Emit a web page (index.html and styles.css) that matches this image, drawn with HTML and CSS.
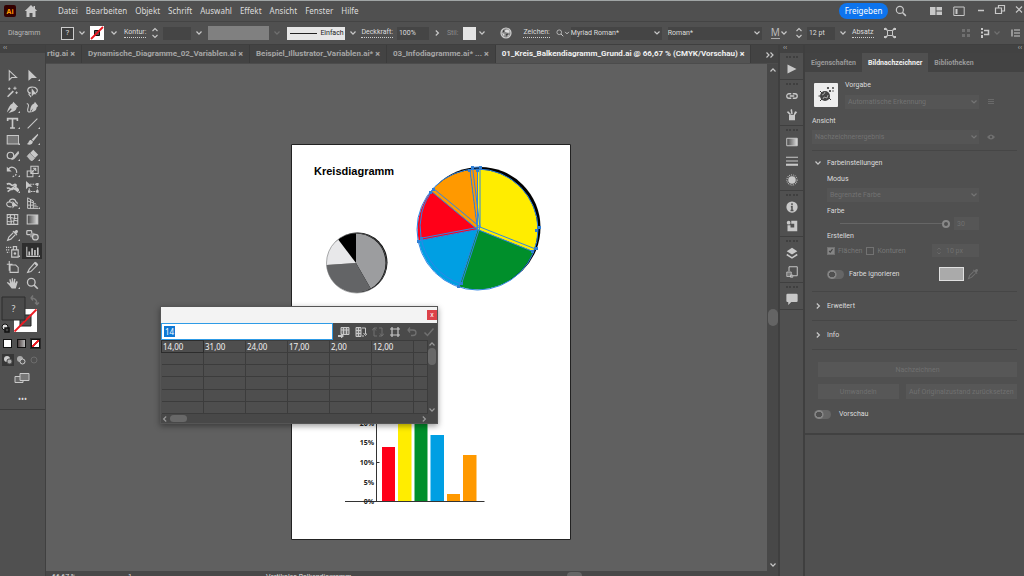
FILE: index.html
```html
<!DOCTYPE html>
<html lang="de">
<head>
<meta charset="utf-8">
<title>01_Kreis_Balkendiagramm_Grund.ai</title>
<link rel="stylesheet" href="styles.css">
</head>
<body>
<svg class="defs" aria-hidden="true">
<defs>
<symbol id="down" viewBox="0 0 8 8"><path d="M1.500 2.500 4 5.200l2.500-2.700" fill="none" stroke="currentColor" stroke-width="1.200"/></symbol>
<symbol id="up" viewBox="0 0 8 8"><path d="M1.500 5.500 4 2.800l2.500 2.700" fill="none" stroke="currentColor" stroke-width="1.200"/></symbol>
<symbol id="right" viewBox="0 0 8 8"><path d="M2.800 1.500 5.400 4 2.800 6.500" fill="none" stroke="currentColor" stroke-width="1.200"/></symbol>
<symbol id="left" viewBox="0 0 8 8"><path d="M5.200 1.500 2.600 4l2.600 2.500" fill="none" stroke="currentColor" stroke-width="1.200"/></symbol>
<symbol id="spin" viewBox="0 0 8 12"><path d="M1.500 4 4 1.500 6.500 4M1.500 8 4 10.500 6.500 8" fill="none" stroke="currentColor" stroke-width="1.100"/></symbol>
<symbol id="lens" viewBox="0 0 16 16"><circle cx="6.500" cy="6.500" r="4.700" fill="none" stroke="currentColor" stroke-width="1.600"/><path d="m10 10 4.500 4.500" stroke="currentColor" stroke-width="2"/></symbol>
<symbol id="drop" viewBox="0 0 16 16"><path d="M9 4.500 3.500 10 2 14l4-1.500L11.500 7" fill="none" stroke="currentColor" stroke-width="1.400"/><path d="m8 3 5 5 1-1-1.200-1.200 1.500-1.500c1.500-1.800-.8-4-2.600-2.600l-1.500 1.500L9 2z" fill="currentColor"/></symbol>
</defs>
</svg>

<header class="menubar">
  <svg class="logo" viewBox="0 0 12 12"><rect width="12" height="12" rx="2" fill="#330000"/><text x="6" y="9" text-anchor="middle" class="logo-text">Ai</text></svg>
  <svg class="home" viewBox="0 0 14 14"><path d="M7 1 .8 7h1.700v6H5.500V9h3v4h3V7h1.700L11 4.800V2H9.500v1.400z" fill="currentColor"/></svg>
  <nav class="menus">
    <a href="#">Datei</a><a href="#">Bearbeiten</a><a href="#">Objekt</a><a href="#">Schrift</a><a href="#">Auswahl</a><a href="#">Effekt</a><a href="#">Ansicht</a><a href="#">Fenster</a><a href="#">Hilfe</a>
  </nav>
  <button class="share">Freigeben</button>
  <svg class="i12 find"><use href="#lens"/></svg>
  <svg class="i12" viewBox="0 0 12 12"><path d="M0 2h5.500v8H0zM6.500 2H12v3.500H6.500zM6.500 6.500H12V10H6.500z" fill="currentColor"/></svg>
  <svg class="i12" viewBox="0 0 12 12"><path d="M.8 2h10.400v8.500H.8z" fill="none" stroke="currentColor"/><path d="M2.500 4h2v5h-2z" fill="currentColor"/></svg>
  <div class="window-buttons">
    <svg class="i12" viewBox="0 0 12 12"><path d="M3 6.500h6" stroke="currentColor" stroke-width="1.500"/></svg>
    <svg class="i12" viewBox="0 0 12 12"><path d="M1.500 4h6v5.500h-6zM4.500 4V1.500h6V7h-3" fill="none" stroke="currentColor" stroke-width="1.200"/></svg>
    <svg class="i12" viewBox="0 0 12 12"><path d="m3 2.500 6 6m0-6-6 6" stroke="currentColor" stroke-width="1.200"/></svg>
  </div>
</header>

<section class="options">
  <span class="object-type">Diagramm</span>
  <button class="fill-box">?</button><svg class="chev w16"><use href="#down"/></svg>
  <svg class="stroke-box" viewBox="0 0 14 14"><path d="M0 0h14v14H0z" fill="#fff"/><path d="M4.500 4.500h5v5h-5z" fill="#555" stroke="#111"/><path d="M1 13 13 1" stroke="#e8141e" stroke-width="1.800"/></svg><svg class="chev w20"><use href="#down"/></svg>
  <label class="link" for="stroke">Kontur:</label><svg class="spin"><use href="#spin"/></svg>
  <input class="field w28" id="stroke"><svg class="chev w16"><use href="#down"/></svg>
  <span class="profile"></span><svg class="chev w16 faint"><use href="#down"/></svg>
  <button class="brush"><i></i>Einfach</button><svg class="chev w16"><use href="#down"/></svg>
  <label class="link" for="opacity">Deckkraft:</label>
  <input class="field w32" id="opacity" value="100%"><svg class="chev w16"><use href="#right"/></svg>
  <span class="dim">Stil:</span><span class="style-box"></span><svg class="chev w12"><use href="#down"/></svg>
  <svg class="globe" viewBox="0 0 12 12"><circle cx="6" cy="6" r="5" fill="#888" stroke="#ccc" stroke-width="1.200"/><path d="M5 3.500c2-2 4-.5 4.500 1S8 6 7 5.500 4.500 5 5 3.500zM2 6l2.500 1L4 9.500zM7 8h2l-1.500 2z" fill="#ddd"/><path d="M3 3l1.500 1L3 5.500zM6 7l2-.5L7 10z" fill="#333"/></svg>
  <label class="link" for="font">Zeichen:</label>
  <svg class="i8"><use href="#lens"/></svg><svg class="i6"><use href="#down"/></svg>
  <select class="font-select" id="font"><option>Myriad Roman*</option></select>
  <select class="font-select cut" aria-label="Schriftschnitt"><option>Roman*</option></select>
  <span class="size-icon">M</span><svg class="i8 gap"><use href="#down"/></svg>
  <svg class="spin"><use href="#spin"/></svg>
  <input class="field w28" value="12 pt" aria-label="Schriftgröße"><svg class="chev w16"><use href="#down"/></svg>
  <a class="link" href="#">Absatz</a>
  <svg class="i12 envelope" viewBox="0 0 12 12"><path d="M3.500 3.500h5v5h-5z" fill="none" stroke="currentColor"/><path d="m1 1 2.500 2.500M11 1 8.500 3.500M1 11l2.500-2.500M11 11 8.500 8.500" stroke="currentColor" stroke-width="1.300"/><path d="M0 1h2.500v2H0zM9.500 1H12v2H9.500zM0 9h2.500v2H0zM9.500 9H12v2H9.500z" fill="currentColor"/></svg>
  <svg class="i12 faint push" viewBox="0 0 12 12"><path d="M2 2h3v3H2zM7 2h3v3H7zM2 7h3v3H2zM7 7h3v3H7z" fill="currentColor"/></svg>
  <svg class="i12" viewBox="0 0 12 12"><path d="M2 1h2v2H2zM2 4.500h2v2H2zM2 8h2v3H2z" fill="currentColor"/><path d="M5 3.500h4.500v4H5" fill="none" stroke="currentColor" stroke-width="1.500"/></svg>
  <svg class="chev w12 faint"><use href="#down"/></svg>
  <svg class="i12 list" viewBox="0 0 12 12"><path d="M2 2.500v7M4 3h6M4 6h6M4 9h6" stroke="currentColor" stroke-width="1.200"/></svg>
</section>

<main class="workspace">
  <aside class="tools">
    <div class="strip">‹‹</div>
    <div class="tool-grid">
      <button aria-label="Auswahl"><svg viewBox="0 0 16 16"><path d="M4 2v11.500L7 10.500h6z" fill="none" stroke="currentColor" stroke-width="1.300"/></svg></button>
      <button class="more" aria-label="Direktauswahl"><svg viewBox="0 0 16 16"><path d="M3 1v13.500L7 11h6.500z" fill="currentColor"/></svg></button>
      <button aria-label="Zauberstab"><svg viewBox="0 0 16 16"><path d="M2 14.500 9 7.500" stroke="currentColor" stroke-width="2"/><path d="M11 2v4M9 4h4M4 3v3M2.500 4.500h3M13 8v3M11.500 9.500h3" stroke="currentColor" stroke-width="1.200"/></svg></button>
      <button aria-label="Lasso"><svg viewBox="0 0 16 16"><path d="M6 10C1 10 .5 3 7 2.500s9 5 5 7M4 10c-2 3 3 3 1.500 5" fill="none" stroke="currentColor" stroke-width="1.500"/><path d="M7 4v10l2.500-2.500H13z" fill="currentColor"/></svg></button>
      <button class="more" aria-label="Zeichenstift"><svg viewBox="0 0 16 16"><path d="m9 1 6 6-2 1c0 4-4 5-10 7l4-5-1-1-5 5C3 8 5 4 8 3z" fill="currentColor"/></svg></button>
      <button aria-label="Kurvenzeichner"><svg viewBox="0 0 16 16"><path d="m11 1 4 5-2 2c0 4-3 5-7 6l3-5-4 4C5 8 7 4 10 3z" fill="currentColor"/><path d="M1 3c4 1 1 5 1 8s2 3 4 2" fill="none" stroke="currentColor" stroke-width="1.300"/></svg></button>
      <button class="more" aria-label="Text"><svg viewBox="0 0 16 16"><path d="M2 5V2h12v3M8 2v11M5 13.500h6" fill="none" stroke="currentColor" stroke-width="2"/></svg></button>
      <button class="more" aria-label="Liniensegment"><svg viewBox="0 0 16 16"><path d="M2 14 14 2" stroke="currentColor" stroke-width="1.400"/></svg></button>
      <button class="more" aria-label="Rechteck"><svg viewBox="0 0 16 16"><path d="M1.500 3h14v10.500h-14z" fill="#777" stroke="currentColor" stroke-width="1.300"/></svg></button>
      <button class="more" aria-label="Pinsel"><svg viewBox="0 0 16 16"><path d="M14.500 1 7 8l2 2 6-7.500zM6 8.500C3 8.500 4 12 1 13.500c3 2 7 1 7.500-3z" fill="currentColor"/></svg></button>
      <button class="more" aria-label="Shaper"><svg viewBox="0 0 16 16"><circle cx="5.500" cy="8" r="4" fill="none" stroke="currentColor" stroke-width="1.500"/><path d="m15 3-6 7-2 3 3-1 6-7z" fill="currentColor" stroke="currentColor"/></svg></button>
      <button class="more" aria-label="Radiergummi"><svg viewBox="0 0 16 16"><path d="m9 1 6 6-4 4-6-6z" fill="currentColor"/><path d="M4.500 5.500 1.500 9l4.500 5h2l2.500-2.500z" fill="#bbb" stroke="currentColor"/></svg></button>
      <button class="more" aria-label="Drehen"><svg viewBox="0 0 16 16"><path d="M3 5c4-5 11-1 10 5-.5 3-4 5-7 4" fill="none" stroke="currentColor" stroke-width="1.500" stroke-dasharray="15 1.500 2 1.500 2"/><path d="M1 2v6h6z" fill="currentColor"/></svg></button>
      <button class="more" aria-label="Skalieren"><svg viewBox="0 0 16 16"><path d="M6 1.500h9v9H6zM1.500 7.500h7v7h-7z" fill="none" stroke="currentColor" stroke-width="1.300"/><path d="m6 10 6-6M8.500 4H12v3.500" fill="none" stroke="currentColor" stroke-width="1.300"/></svg></button>
      <button class="more" aria-label="Breite"><svg viewBox="0 0 16 16"><path d="M1 4c5-3 5 3 8 1s4 0 3 2 4 2 3 5M1 9c4-2 5 3 7 1s4 0 7 3M2 13l11-8" fill="none" stroke="currentColor" stroke-width="2"/></svg></button>
      <button aria-label="Frei transformieren"><svg viewBox="0 0 16 16"><path d="M5 4h9v9H4V8" fill="none" stroke="currentColor" stroke-width="1.300" stroke-dasharray="2 1"/><path d="M0 0v10l3-3h5zM12.500 2.500h3v3h-3zM12.500 11.500h3v3h-3zM2.500 11.500h3v3h-3z" fill="currentColor"/></svg></button>
      <button class="more" aria-label="Formerstellung"><svg viewBox="0 0 16 16"><path d="M7 12C0 13-1 6 4 6c1-5 8-4 8 0 2 0 2 2 2 3M4 6c3 0 5 2 4 5" fill="none" stroke="currentColor" stroke-width="1.300"/><path d="M8 5v9l2.500-2.500H15z" fill="currentColor"/></svg></button>
      <button class="more" aria-label="Perspektivenraster"><svg viewBox="0 0 16 16"><path d="M2 1v13h13M2 1l7 4v9M2 5l7 2M2 10h7M5.500 3v11" fill="none" stroke="currentColor" stroke-width="1.200"/><path d="M10 8h2M10 10h3M10 12h5" stroke="currentColor"/></svg></button>
      <button aria-label="Gitter"><svg viewBox="0 0 16 16"><path d="M1.500 2h13v12h-13zM1.500 6c5-3 8 3 13 0M1.500 10c5 3 8-3 13 0M6 2c-3 4 3 8 0 12M10 2c3 4-3 8 0 12" fill="none" stroke="currentColor" stroke-width="1.300"/></svg></button>
      <button aria-label="Verlauf"><svg viewBox="0 0 16 16"><defs><linearGradient id="grad"><stop stop-color="#444"/><stop offset="1" stop-color="#ddd"/></linearGradient></defs><path d="M1.500 2.500h13v11h-13z" fill="url(#grad)" stroke="currentColor" stroke-width="1.300"/></svg></button>
      <button class="more" aria-label="Pipette"><svg><use href="#drop"/></svg></button>
      <button aria-label="Angleichen"><svg viewBox="0 0 16 16"><rect x="1" y="2" width="6" height="5" rx="1" fill="none" stroke="currentColor" stroke-width="1.500"/><rect x="5" y="4.500" width="6" height="6" rx="2" fill="#999"/><circle cx="11.500" cy="10" r="3.500" fill="#666" stroke="currentColor" stroke-width="1.500"/></svg></button>
      <button class="more" aria-label="Symbol aufsprühen"><svg viewBox="0 0 16 16"><path d="M7 6h8v9H7zM9 2h4v4H9z" fill="none" stroke="currentColor" stroke-width="1.400"/><circle cx="11" cy="10.500" r="1.500" fill="currentColor"/><path d="M0 3h7M0 6h5M1 9h3" stroke="currentColor" stroke-width="1.500" stroke-dasharray="1.500 1"/></svg></button>
      <button class="more active" aria-label="Diagramm"><svg viewBox="0 0 16 16"><path d="M1 2v12h14" fill="none" stroke="currentColor" stroke-width="1.300"/><path d="M3 8h2v5H3zM6.500 4h2v9h-2zM10 6h2v7h-2zM13.500 3h2v10h-2z" fill="currentColor"/></svg></button>
      <button aria-label="Zeichenfläche"><svg viewBox="0 0 16 16"><path d="M4 0v12M1 4h7M5 5h7l3 3v6H5z" fill="none" stroke="currentColor" stroke-width="1.300"/></svg></button>
      <button class="more" aria-label="Slice"><svg viewBox="0 0 16 16"><path d="m11 2 3 3-8 8-4 1 2-4z" fill="none" stroke="currentColor" stroke-width="1.400"/><path d="m10 3 2-2 3 3-2 2z" fill="currentColor"/></svg></button>
      <button class="more" aria-label="Hand"><svg viewBox="0 0 16 16"><path d="M4 10 1 7l1-1 3 2-1-5 1.500-.5L7 7V1.500h1.700V7l1.500-5 1.500.5L11 8l2-3 1.500.8L12 14H7z" fill="currentColor"/></svg></button>
      <button aria-label="Zoom"><svg><use href="#lens"/></svg></button>
    </div>
    <svg class="paint" viewBox="0 0 44 42">
      <path d="M31 4q6 0 6 6M33 1.500 31 4l2 2.500M35 8.500l2 2 2-2" fill="none" stroke="#777" stroke-width="1.300"/>
      <path d="M14 15h23v23H14z" fill="#fff"/><path d="M20 21h11v11H20z" fill="#505050" stroke="#222"/><path d="m14.500 37.500 22-22" stroke="#ed1c24" stroke-width="1.800"/>
      <path d="M2 3h23v23H2z" fill="#4a4a4a" stroke="#2d2d2d"/><text x="13.500" y="18" text-anchor="middle" class="unknown">?</text>
      <circle cx="5" cy="33" r="3" fill="#ddd" stroke="#111"/><path d="M5 34h4v4H5z" fill="#444" stroke="#111" stroke-width="1.500"/>
    </svg>
    <div class="paint-modes">
      <button aria-label="Farbe"><i class="solid"></i></button><button aria-label="Verlauf"><i class="fade"></i></button><button class="none" aria-label="Ohne"><i class="slash"></i></button>
    </div>
    <div class="draw-modes">
      <svg class="on" viewBox="0 0 12 12"><circle cx="5" cy="5" r="3" fill="#ccc"/><rect x="5" y="5" width="5" height="5" rx="2" fill="#aaa" stroke="#444"/></svg>
      <svg viewBox="0 0 12 12"><circle cx="5" cy="5" r="3" fill="#aaa"/><circle cx="7.500" cy="7.500" r="2.500" fill="#555" stroke="#ccc"/></svg>
      <svg viewBox="0 0 12 12"><circle cx="6" cy="6" r="3" fill="none" stroke="#6c6c6c"/></svg>
    </div>
    <svg class="screen" viewBox="0 0 16 12"><path d="M1 4.500h8v6H1z" fill="#666" stroke="currentColor"/><path d="M6 1.500h9v7H6z" fill="#777" stroke="currentColor"/></svg>
    <div class="dots">•••</div>
  </aside>

  <section class="document">
    <div class="tabs">
      <a class="tab first" href="#">rtig.ai<b>×</b></a>
      <a class="tab" href="#">Dynamische_Diagramme_02_Variablen.ai<b>×</b></a>
      <a class="tab" href="#">Beispiel_Illustrator_Variablen.ai*<b>×</b></a>
      <a class="tab" href="#">03_Infodiagramme.ai* ...<b>×</b></a>
      <a class="tab current" href="#">01_Kreis_Balkendiagramm_Grund.ai @ 66,67 % (CMYK/Vorschau)<b>×</b></a>
      <svg class="tabs-more" viewBox="0 0 10 8"><path d="m1.500 1.500 2.500 2.500-2.500 2.500M5.500 1.500 8 4 5.500 6.500" fill="none" stroke="currentColor" stroke-width="1.200"/></svg>
    </div>
    <div class="view">
      <div class="canvas">
        <svg class="artboard" viewBox="291 144 280 396">
          <path d="M291.500 144.500h279v395h-279z" fill="#fff" stroke="#222"/>
          <text x="314" y="175" class="chart-title">Kreisdiagramm</text>
          <circle cx="357.500" cy="262.500" r="30"/>
          <g>
            <path d="M356 263V233.500A29.500 29.500 0 0 1 370.700 288.600z" fill="#9c9d9f"/>
            <path d="M356 263 370.700 288.600A29.500 29.500 0 0 1 326.500 265z" fill="#636466"/>
            <path d="M356 263 326.500 265A29.500 29.500 0 0 1 338.200 239.500z" fill="#e8e8ea"/>
            <circle cx="356.500" cy="263" r="30" fill="none" stroke="#77787a" stroke-width=".6"/>
          </g>
          <circle cx="480" cy="227.500" r="60.500"/>
          <g>
            <path d="M477.500 229.500V169.500H480A60 60 0 0 1 533.300 251.600z" fill="#ffed00"/>
            <path d="M477.500 229.500 533.300 251.600A60 60 0 0 1 459 286.600z" fill="#008f2b"/>
            <path d="M477.500 229.500 459 286.600A60 60 0 0 1 418.600 240.700z" fill="#009fe3"/>
            <path d="M477.500 229.500 418.600 240.700A60 60 0 0 1 431.300 191.300z" fill="#ff0018"/>
            <path d="M477.500 229.500 431.300 191.300A60 60 0 0 1 470 170z" fill="#ff9900"/>
            <path d="M477.500 229.500 470 170A60 60 0 0 1 477.500 169.500z" fill="#ff9900"/>
          </g>
          <g fill="none" stroke="#2f86e6">
            <circle cx="477.500" cy="229.500" r="60.500"/>
            <path d="M480 227V167M480 227 535.800 249.100M480 227 461.500 284.100M480 227 421.100 238.200M480 227 433.800 188.800M480 227 472.500 167.500M477.500 229.500V169.500M477.500 229.500 533.300 251.600M477.500 229.500 459 286.600M477.500 229.500 418.600 240.700M477.500 229.500 431.300 191.300M477.500 229.500 470 170M472.500 167.500A60 60 0 0 1 480 167M461.500 284.100A60 60 0 0 1 421.100 238.200M421.100 238.200A60 60 0 0 1 433.800 188.800"/>
          </g>
          <path d="M479 166h3v3h-3zM471 166h3v3h-3zM432 188h3v3h-3zM429 191h3v3h-3zM417 240h3v3h-3zM420 237h3v3h-3zM457 285h3v3h-3zM460 282h3v3h-3zM535 247h3v3h-3zM531 250h3v3h-3zM538 226h3v3h-3zM535 229h3v3h-3zM468 169h3v3h-3zM476 169h3v3h-3z" fill="#2f7fd6"/>
          <path d="M382 447h13v54h-13z" fill="#ff0018"/><path d="M398 380h13.500v121H398z" fill="#ffed00"/><path d="M414.500 407h13v94h-13z" fill="#008f2b"/><path d="M430.500 435h13.500v66h-13.500z" fill="#009fe3"/><path d="M447 494h13v7h-13zM463 455h13.500v46H463z" fill="#ff9900"/>
          <path d="M376.500 350v151.500M376.500 462.500h3M345 501.500h139.500" stroke="#333" fill="none"/>
          <g class="axis" text-anchor="end"><text x="374" y="426">20%</text><text x="374" y="445">15%</text><text x="374" y="465">10%</text><text x="374" y="485">5%</text><text x="374" y="504">0%</text></g>
        </svg>

        <section class="data-window">
          <div class="data-title"><button aria-label="Schließen">x</button></div>
          <div class="data-bar">
            <div class="entry"><input value="14" aria-label="Zellwert" class="entry-input"><mark>14</mark></div>
            <svg viewBox="0 0 12 12"><path d="M3 1.500h8v7H3zM3 4h8M5.500 1.500v7M8.500 1.500v7" fill="#777" stroke="currentColor"/><path d="M0 9h3V7l3 3-3 2.500V11H0z" fill="currentColor"/></svg>
            <svg viewBox="0 0 12 12"><path d="M1 1.500h5v9H1zM1 4.500h5M1 7.500h5M3.500 1.500v9" fill="#777" stroke="currentColor"/><path d="M7 2h3.500v6M8.500 7l2 2.500 2-2.500M7 10h2" fill="none" stroke="currentColor"/></svg>
            <svg class="faint" viewBox="0 0 12 12"><path d="M5 2H2v8h3M7 2h3v8H7M4 4.500 2 2 0 4.500M12 7.500 10 10 8 7.500" fill="none" stroke="currentColor"/></svg>
            <svg viewBox="0 0 12 12"><path d="M1 3h10M1 9h10M3 1v10M9 1v10" stroke="currentColor" stroke-width="1.200"/></svg>
            <svg class="faint" viewBox="0 0 12 12"><path d="M4 1.500 2 4l2 2.500M2 4h5c4 0 4 5.500 0 5.500H5" fill="none" stroke="currentColor" stroke-width="1.300"/></svg>
            <svg class="faint" viewBox="0 0 12 12"><path d="m1.500 6.500 3 3 6-7" fill="none" stroke="currentColor" stroke-width="1.500"/></svg>
          </div>
          <div class="data-body">
            <table>
              <tr><td class="picked">14,00</td><td>31,00</td><td>24,00</td><td>17,00</td><td>2,00</td><td>12,00</td><td class="rest"></td></tr>
              <tr><td></td><td></td><td></td><td></td><td></td><td></td><td></td></tr>
              <tr><td></td><td></td><td></td><td></td><td></td><td></td><td></td></tr>
              <tr><td></td><td></td><td></td><td></td><td></td><td></td><td></td></tr>
              <tr><td></td><td></td><td></td><td></td><td></td><td></td><td></td></tr>
              <tr><td></td><td></td><td></td><td></td><td></td><td></td><td></td></tr>
            </table>
            <div class="data-v"><svg class="i8"><use href="#up"/></svg><i></i><svg class="i8 end"><use href="#down"/></svg></div>
          </div>
          <div class="data-h"><svg class="i8"><use href="#left"/></svg><i></i><svg class="i8 end"><use href="#right"/></svg></div>
        </section>
      </div>
      <div class="scroll"><svg class="i8"><use href="#up"/></svg><i></i><svg class="i8"><use href="#down"/></svg></div>
    </div>
    <footer class="status"><span class="zoom-level">66,67 %</span><span class="board">1</span><span>Vertikales Balkendiagramm</span><i class="track"><i></i></i></footer>
  </section>

  <aside class="dock">
    <div class="strip">‹‹</div>
    <div class="group"><svg viewBox="0 0 16 16"><path d="M2 2v12l12-6z" fill="currentColor"/></svg></div>
    <div class="group"><svg viewBox="0 0 16 16"><path d="M7 5H4a3 3 0 0 0 0 6h3M9 5h3a3 3 0 0 1 0 6H9M5 8h6" fill="none" stroke="currentColor" stroke-width="1.700"/></svg><svg viewBox="0 0 16 16"><path d="M4 8h8v7H4zM7 7 6 1l2-1 1 7zM5 8 1 4l2-1 4 4zM10 8l2-5 3 1-3 4z" fill="currentColor"/></svg></div>
    <div class="group"><svg viewBox="0 0 16 16"><path d="M1 3h14v10H1z" fill="url(#grad)" stroke="currentColor" stroke-width="1.300"/></svg><svg viewBox="0 0 16 16"><path d="M0 3h16M0 8h16" stroke="currentColor" stroke-width="1.600"/><path d="M0 13h16" stroke="currentColor" stroke-width="2.800"/></svg><svg viewBox="0 0 16 16"><circle cx="8" cy="8" r="5" fill="currentColor"/><circle cx="8" cy="8" r="6.800" fill="none" stroke="currentColor" stroke-width="1.500" stroke-dasharray="1 1.500"/></svg></div>
    <div class="group"><svg viewBox="0 0 16 16"><circle cx="8" cy="8" r="7.500" fill="currentColor"/><path d="M8 3v2.500M6.500 7.500H8v5M6 12.500h4" stroke="#505050" stroke-width="2" fill="none"/></svg><svg viewBox="0 0 16 16"><path d="M7 1h8v14H2V7h4v3h5V5H7z" fill="currentColor"/><circle cx="3.500" cy="3.500" r="2.500" fill="currentColor"/></svg></div>
    <div class="group"><svg viewBox="0 0 16 16"><path d="m8 1 7 4.500L8 10 1 5.500z" fill="currentColor"/><path d="m1 10 7 4.500 7-4.500" fill="none" stroke="currentColor" stroke-width="2"/></svg><svg viewBox="0 0 16 16"><path d="M4 7V1h11v12H8" fill="none" stroke="currentColor" stroke-width="1.300"/><path d="M1 8h6v6H1zM6 12h3v3H6z" fill="#777" stroke="currentColor"/></svg></div>
    <div class="group"><svg viewBox="0 0 16 16"><path d="M2 1h12q1.500 0 1.500 1.500v8Q15.500 12 14 12H7l-4 4v-4H2Q.5 12 .5 10.500v-8Q.5 1 2 1z" fill="currentColor"/></svg></div>
  </aside>

  <aside class="panel">
    <div class="strip end">‹‹</div>
    <div class="panel-tabs"><button>Eigenschaften</button><button class="current">Bildnachzeichner</button><button>Bibliotheken</button></div>
    <div class="trace">
      <div class="preset">
        <svg class="preset-icon" viewBox="0 0 24 24"><rect width="24" height="24" rx="1" fill="#eee"/><path d="m6 8 2 2M17 17l-2-2M6 18l2-2M4.500 13h2" stroke="#333"/><circle cx="11" cy="13" r="5" fill="#444"/><path d="m8 12 2-1 1-2M9 16l1-2 3 1 1-3" stroke="#bbb" fill="none" stroke-width=".8"/><circle cx="14" cy="5" r="1.100" fill="#333"/><circle cx="16" cy="8" r="1.100" fill="#333"/><circle cx="19" cy="5" r=".9" fill="#333"/><circle cx="19" cy="8" r=".7" fill="#333"/></svg>
        <div class="preset-field"><label for="preset">Vorgabe</label><select id="preset"><option>Automatische Erkennung</option></select></div>
        <svg class="i8 side faint" viewBox="0 0 8 8"><path d="M1 1.500h6M1 3.500h6M1 5.500h6" stroke="currentColor" stroke-width=".8"/></svg>
      </div>
      <label class="view-label" for="view">Ansicht</label>
      <div class="view-row"><select id="view"><option>Nachzeichnerergebnis</option></select><svg class="i8 side faint" viewBox="0 0 8 8"><path d="M0 4q4-5 8 0-4 5-8 0z" fill="currentColor"/><circle cx="4" cy="4" r="1.200" fill="#505050"/></svg></div>
      <button class="fold"><svg class="i8"><use href="#down"/></svg>Farbeinstellungen</button>
      <div class="color-settings">
        <label for="mode">Modus</label>
        <select id="mode"><option>Begrenzte Farbe</option></select>
        <label class="upper" for="colors">Farbe</label>
        <div class="slider-row"><input type="range" id="colors" min="0" max="30" value="30"><input class="number" value="30" aria-label="Anzahl Farben"></div>
        <span>Erstellen</span>
        <div class="create-row">
          <label><input type="checkbox" checked>Flächen</label><label><input type="checkbox">Konturen</label>
          <span class="number px"><svg class="i8 faint"><use href="#spin"/></svg><input value="10 px" aria-label="Kontur"></span>
        </div>
        <div class="ignore-row"><label><input type="checkbox" class="toggle">Farbe ignorieren</label><button class="swatch" aria-label="Farbe wählen"></button><svg class="i12 faint"><use href="#drop"/></svg></div>
      </div>
      <button class="fold tall"><svg class="i8"><use href="#right"/></svg>Erweitert</button>
      <button class="fold tall"><svg class="i8"><use href="#right"/></svg>Info</button>
      <div class="actions"><button class="wide">Nachzeichnen</button><button>Umwandeln</button><button>Auf Originalzustand zurücksetzen</button></div>
      <label class="preview"><input type="checkbox" class="toggle">Vorschau</label>
    </div>
  </aside>
</main>
</body>
</html>
```

FILE: styles.css
```css
* { box-sizing: border-box; }
body {
  margin: 0;
  height: 100vh;
  overflow: hidden;
  display: flex;
  flex-direction: column;
  background: #505050;
  color: #dcdcdc;
  font: 7px/10px Roboto, "Noto Sans", sans-serif;
}
button, input, select { font: inherit; color: inherit; border: 0; padding: 0; margin: 0; background: none; border-radius: 0; appearance: none; }
a { color: inherit; text-decoration: none; }
svg { flex: none; display: block; color: #c8c8c8; }
.defs { position: absolute; width: 0; height: 0; }
.i6 { width: 6px; height: 6px; }
.i8 { width: 8px; height: 8px; }
.i12 { width: 12px; height: 12px; }
.faint { color: #707070; }

.menubar { flex: none; height: 22px; display: flex; align-items: center; border-top: 1px solid #a0a5a5; border-bottom: 1px solid #444; padding-left: 4px; }
.logo { width: 12px; height: 12px; }
.logo-text { font: bold 7px "Noto Sans", sans-serif; fill: #ff9a00; }
.home { width: 14px; height: 14px; margin: 0 20px 0 8px; }
.menus { flex: 1; display: flex; gap: 8px; font: 8px/10px "Noto Sans", sans-serif; }
.share { width: 49px; height: 16px; border-radius: 8px; background: #0d74ee; color: #fff; font: 8px/10px "Noto Sans", sans-serif; }
.find { margin: 0 23px 0 7px; }
.menubar .find ~ .i12 + .i12 { margin-left: 11px; }
.window-buttons { display: flex; gap: 7px; margin: 0 -1px 3px 10px; }

.options { flex: none; height: 23px; display: flex; align-items: center; padding: 0 2px 0 8px; border-bottom: 1px solid #3f3f3f; white-space: nowrap; }
.object-type { width: 53px; color: #b8b8b8; }
.fill-box { width: 13px; height: 13px; border: 1px solid #ccc; background: #3d3d3d; line-height: 10px; font-size: 8px; }
.chev { height: 8px; }
.w12 { width: 12px; }
.w16 { width: 16px; }
.w20 { width: 20px; }
.stroke-box { width: 14px; height: 14px; }
.link { border-bottom: 1px dotted #ccc; line-height: 9px; }
.spin { width: 8px; height: 12px; margin: 0 4px 0 5px; }
.field { height: 13px; background: #454545; padding-left: 2px; }
.w28 { width: 28px; }
.w32 { width: 32px; }
.profile { width: 61px; height: 14px; margin-left: 1px; background: #808080; }
.brush { width: 58px; height: 13px; margin-left: 2px; background: #e6e6e6; color: #222; display: flex; align-items: center; gap: 3px; padding-left: 3px; }
.brush i { width: 27px; border-top: 1px solid #222; }
.options .field.w32 { margin-left: 4px; }
.dim { color: #8c8c8c; margin-left: 2px; }
.style-box { width: 13px; height: 13px; background: #e4e4e4; margin-left: 5px; }
.globe { width: 12px; height: 12px; margin: 0 11px 0 12px; }
.options .link + .i8 { margin-left: 6px; }
select { appearance: none; background: #454545 url("data:image/svg+xml,%3Csvg xmlns='http://www.w3.org/2000/svg' width='8' height='8'%3E%3Cpath d='M1.500 2.500 4 5l2.500-2.500' fill='none' stroke='%23c8c8c8' stroke-width='1.200'/%3E%3C/svg%3E") right 1px center no-repeat; }
.font-select { width: 91px; height: 13px; margin-left: 1px; padding-left: 0; }
.font-select.cut { width: 94px; margin-left: 6px; }
.size-icon { font: 10px/11px "Noto Sans", sans-serif; color: #bbb; margin-left: 9px; border-bottom: 1px solid #aaa; }
.options .gap { margin-right: 2px; }
.options a.link { margin-left: 1px; }
.envelope { margin-left: 10px; }
.push { margin-left: auto; margin-right: 7px; }
.list { margin-left: 7px; }

.workspace { flex: 1; min-height: 0; display: flex; }
.strip { flex: none; height: 8px; background: #424242; color: #bbb; line-height: 6px; padding-left: 3px; }
.strip.end { text-align: right; padding-right: 2px; }
.tools { width: 46px; flex: none; border-right: 1px solid #404040; }
.tool-grid { display: grid; grid-template-columns: repeat(2, 20px); grid-auto-rows: 16px; padding: 14px 0 0 2px; }
.tool-grid button { position: relative; display: grid; place-items: center; }
.tool-grid svg { width: 13px; height: 13px; }
.tool-grid .more::after { content: ""; position: absolute; right: 2px; bottom: 2px; border: 1px solid #c8c8c8; border-top-color: transparent; border-left-color: transparent; }
.tool-grid .active { background: #2e2e2e; }
.paint { width: 44px; height: 42px; margin-top: 3px; }
.unknown { font: 9px "Noto Sans", sans-serif; fill: #ddd; }
.paint-modes { display: flex; gap: 3px; padding-left: 2px; margin-top: 2px; }
.paint-modes button { width: 11px; height: 11px; padding: 1px; display: flex; }
.paint-modes i { flex: 1; border: 1px solid #111; }
.solid { background: #fff; }
.fade { background: linear-gradient(90deg, #4b4040, #bbb); }
.slash { background: linear-gradient(135deg, #fff 40%, #ed1c24 40% 60%, #fff 60%); }
.paint-modes .none { background: #2e2e2e; }
.draw-modes { display: flex; gap: 1px; padding: 5px 0 0 2px; }
.draw-modes svg { width: 12px; height: 12px; }
.draw-modes .on { background: #363636; }
.screen { width: 16px; height: 12px; margin: 6px 0 0 14px; }
.dots { text-align: center; padding: 10px 0 5px; font: 8px/10px "Noto Sans", sans-serif; border-bottom: 1px solid #3c3c3c; }

.document { flex: 1; min-width: 0; display: flex; flex-direction: column; }
.tabs { flex: none; height: 19px; background: #434343; display: flex; color: #a6a6a6; font-size: 8px; font-weight: 700; overflow: hidden; border-bottom: 1px solid #4c4c4c; }
.tab { flex: none; display: flex; align-items: center; gap: 2px; padding: 0 6px; white-space: nowrap; border-right: 1px solid #3b3b3b; }
.tab b { font-size: 9px; }
.tab.first { padding-left: 1px; }
.tab.current { background: #535353; color: #f0f0f0; }
.tabs-more { width: 10px; height: 8px; margin: 6px 3px 0 auto; }
.view { flex: 1; min-height: 0; display: flex; }
.canvas { flex: 1; position: relative; overflow: hidden; background: #606060; }
.artboard { position: absolute; left: 245px; top: 80px; width: 280px; height: 396px; }
.chart-title { font: bold 11px "Liberation Sans", sans-serif; }
.axis { font: bold 7px "Noto Sans", sans-serif; fill: #222; }
.scroll { width: 11px; flex: none; background: #484848; display: flex; flex-direction: column; align-items: center; justify-content: space-between; padding: 2px 0; }
.scroll i { width: 10px; height: 17px; border-radius: 5px; background: #646464; }
.status { flex: none; height: 5px; overflow: hidden; display: flex; gap: 52px; padding: 1px 0 0 6px; background: #484848; white-space: nowrap; }
.board { flex: 0 0 86px; }
.track { flex: 1; padding-left: 164px; }
.track i { display: block; width: 15px; height: 8px; border-radius: 4px; background: #666; }

.data-window { position: absolute; left: 114px; top: 242px; width: 278px; border: 1px solid #555; background: #4e4e4e; box-shadow: 0 2px 6px #0006; }
.data-title { height: 16px; background: #f3f3f3; display: flex; justify-content: flex-end; align-items: center; }
.data-title button { width: 10px; height: 10px; background: #dc4249; color: #fff; line-height: 7px; }
.data-bar { height: 17px; display: flex; align-items: center; gap: 5px; padding-right: 1px; background: #4a4a4a; }
.data-bar svg { width: 12px; height: 12px; }
.entry { position: relative; width: 172px; height: 17px; border: 1px solid #2e9be6; background: #fff; }
.entry-input { width: 100%; height: 100%; padding-left: 3px; color: #222; font-size: 8px; }
.entry mark { position: absolute; left: 2px; top: 2px; background: #0f78d4; color: #fff; font: 8px/11px "Noto Sans", sans-serif; padding: 0 1px; }
.data-body { display: flex; height: 74px; overflow: hidden; }
.data-body table { flex: 1; width: 100%; table-layout: fixed; border-collapse: collapse; font: 8px/10px "Noto Sans", sans-serif; color: #f0f0f0; }
.data-body td { width: 42px; height: 12px; padding: 0 1px; border: 1px solid #3c3c3c; border-left: 0; }
.data-body td.rest { width: auto; }
.data-body .picked { border: 1px solid #2c2c2c; }
.data-v { width: 9px; flex: none; display: flex; flex-direction: column; background: #484848; }
.data-v i { width: 8px; height: 17px; border-radius: 4px; background: #686868; }
.data-v .end { margin-top: auto; }
.data-h { display: flex; align-items: center; height: 9px; background: #484848; }
.data-h i { width: 17px; height: 7px; margin-left: 1px; border-radius: 4px; background: #686868; }
.data-h .end { margin: 0 9px 0 auto; }
.data-v svg, .data-h svg { color: #999; }

.dock { width: 27px; flex: none; border-left: 2px solid #3f3f3f; border-right: 2px solid #3f3f3f; }
.group { padding: 6px 0 1px; border-bottom: 1px solid #3f3f3f; position: relative; }
.group::before { content: ""; position: absolute; left: 6px; top: 3px; width: 12px; border-top: 2px dotted #3f3f3f; }
.group svg { width: 12px; height: 12px; margin: 4px auto 7px; }
.group svg + svg { margin-top: 0; }
.group svg:last-child { margin-bottom: 3px; }
.group:first-of-type svg { margin-bottom: 4px; }

.panel { width: 219px; flex: none; }
.panel-tabs { height: 19px; display: flex; background: #434343; color: #999; font-weight: 700; }
.panel-tabs button { padding: 0 6px; }
.panel-tabs .current { background: #505050; color: #f0f0f0; }
.trace { padding: 8px 7px 14px; border-bottom: 2px solid #414141; }
.preset { display: flex; align-items: center; }
.preset-icon { width: 24px; height: 24px; margin: 0 7px 0 2px; }
.preset-field { display: grid; gap: 5px; flex: 1; }
.side { margin: 0 22px 0 8px; }
.preset .side { margin-top: 14px; }
.trace select { width: 100%; height: 14px; padding-left: 3px; background-color: #555; background-image: url("data:image/svg+xml,%3Csvg xmlns='http://www.w3.org/2000/svg' width='8' height='8'%3E%3Cpath d='M1.500 2.500 4 5l2.500-2.500' fill='none' stroke='%23747474' stroke-width='1.200'/%3E%3C/svg%3E"); color: #727272; }
.view-label { display: block; margin-top: 7px; }
.view-row { display: flex; align-items: center; margin: 4px 0 6px; }
.fold { width: 100%; display: flex; align-items: center; gap: 5px; padding: 7px 0 4px 2px; border-top: 1px solid #464646; text-align: left; }
.color-settings { padding: 2px 38px 10px 15px; display: flex; flex-direction: column; }
.color-settings .upper { margin-top: 4px; }
.color-settings select { margin-top: 4px; }
.slider-row { display: flex; gap: 4px; align-items: center; padding-left: 13px; margin: 1px 0; }
.slider-row input[type=range] { flex: 1; min-width: 0; height: 8px; background: linear-gradient(#666, #666) center / 100% 1px no-repeat; }
input[type=range]::-webkit-slider-thumb { appearance: none; width: 8px; height: 8px; border: 2px solid #888; border-radius: 4px; background: #505050; }
.number { width: 25px; height: 13px; padding-left: 3px; background: #565656; color: #707070; }
.create-row { display: flex; align-items: center; color: #777; margin-top: 3px; }
.create-row label { display: flex; align-items: center; gap: 3px; margin-right: 4px; }
.create-row label input { width: 8px; height: 8px; border: 1px solid #727272; }
.create-row input:checked { background: #858585 url("data:image/svg+xml,%3Csvg xmlns='http://www.w3.org/2000/svg' viewBox='0 0 8 8'%3E%3Cpath d='M1.500 4 3 5.500l3-4' fill='none' stroke='%23444' stroke-width='1.500'/%3E%3C/svg%3E"); }
.number.px { width: 47px; display: flex; align-items: center; gap: 3px; margin-left: auto; }
.number.px input { width: 30px; }
.ignore-row { display: flex; align-items: center; margin-top: 10px; }
.ignore-row label { display: flex; align-items: center; gap: 5px; flex: 1; }
.toggle { width: 17px; height: 9px; border-radius: 5px; background: radial-gradient(circle at 5px 50%, #505050 3px, #858585 3px 4px, #666 5px); }
.swatch { width: 25px; height: 14px; background: #aaa; border: 1px solid #e0e0e0; margin-right: 3px; }
.tall { padding: 9px 0 9px 2px; }
.actions { display: grid; grid-template-columns: 81fr 112fr; gap: 7px; padding: 12px 0 0 6px; border-top: 1px solid #464646; }
.actions button { height: 15px; background: #575757; color: #707070; white-space: nowrap; }
.actions .wide { grid-column: 1 / 3; }
.preview { display: flex; align-items: center; gap: 8px; padding: 10px 0 0 2px; }
```
